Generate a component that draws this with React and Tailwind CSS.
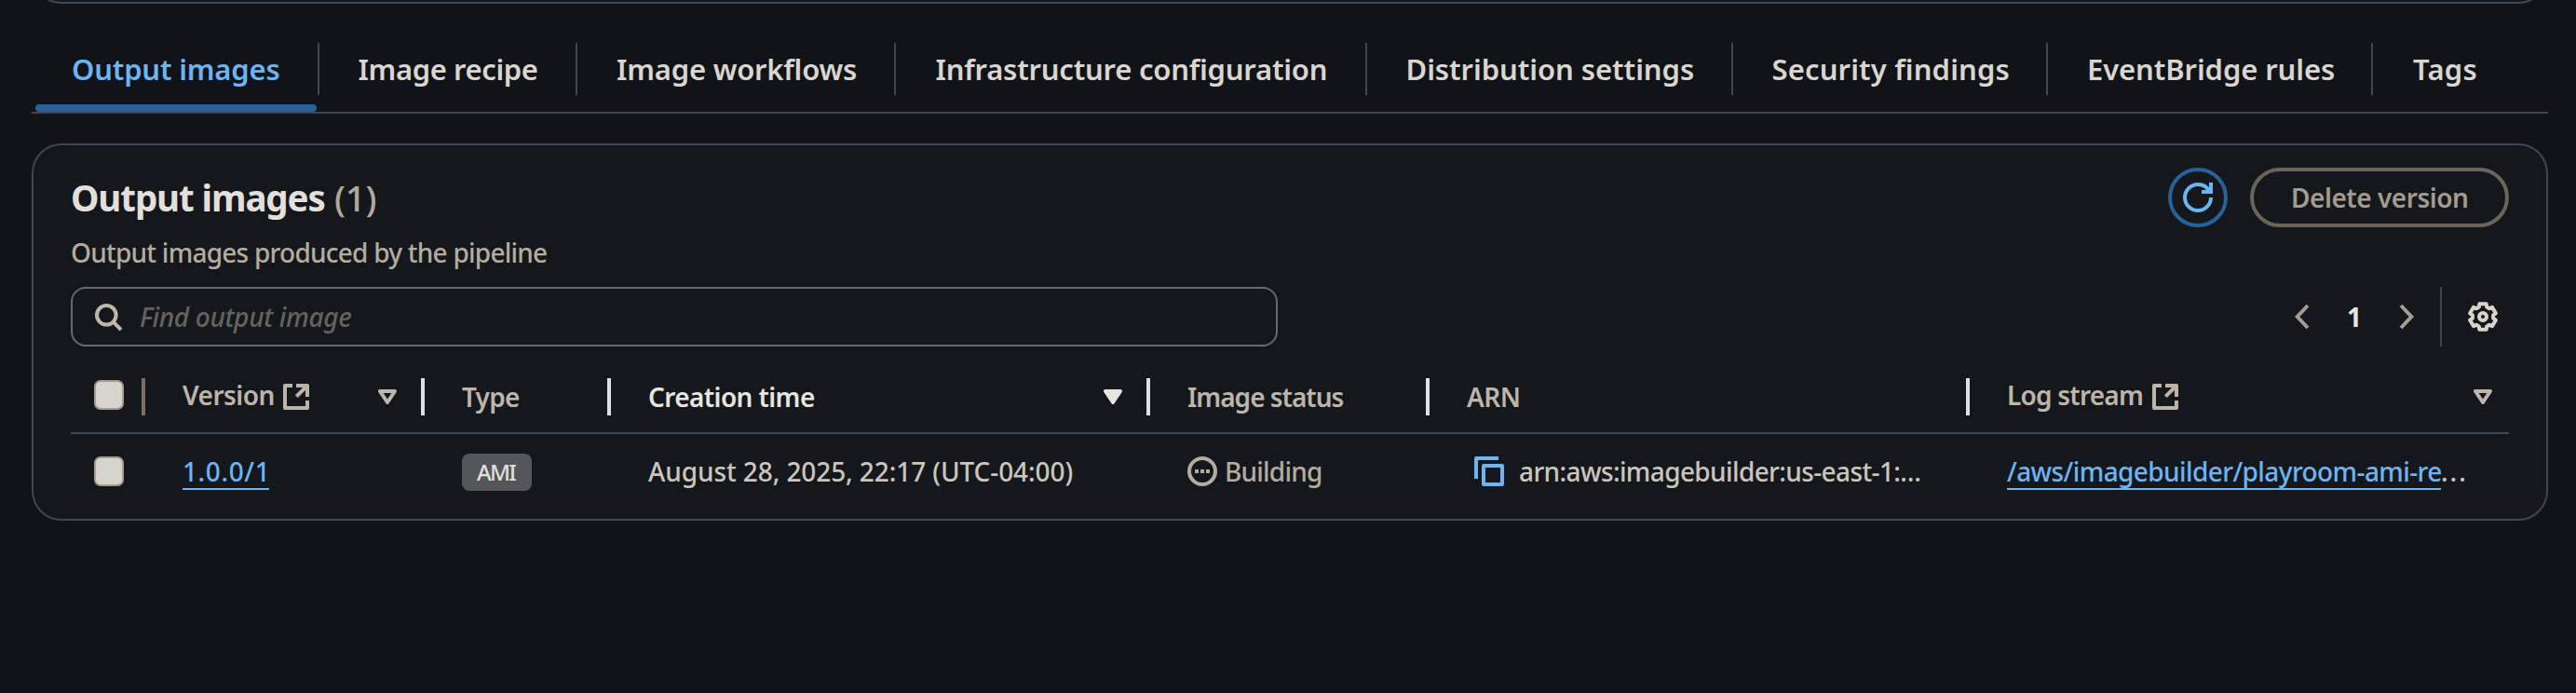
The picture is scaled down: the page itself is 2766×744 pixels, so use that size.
const tabs = [
  { label: 'Output images', size: 'w-[309px] pl-[43px] tracking-[-0.2px]', active: true },
  { label: 'Image recipe', size: 'w-[277px] pl-[41.5px] tracking-[-0.4px]' },
  { label: 'Image workflows', size: 'w-[342px] pl-[42px] tracking-[-0.22px]' },
  { label: 'Infrastructure configuration', size: 'w-[506px] pl-[42.5px] tracking-[-0.22px]' },
  { label: 'Distribution settings', size: 'w-[393px] pl-[41.5px] tracking-[-0.06px]' },
  { label: 'Security findings', size: 'w-[338px] pl-[41.5px] tracking-[0.14px]' },
  { label: 'EventBridge rules', size: 'w-[349px] pl-[42px] tracking-[-0.1px]' },
  { label: 'Tags', size: 'w-[188px] pl-[43px] tracking-[0.23px]', last: true },
];

function Tab({ label, size, active, last }) {
  return (
    <div className={`relative flex h-[118px] items-start pt-[42px] ${size}`}>
      <span
        className={`flex h-14 items-center whitespace-nowrap text-[31px] font-semibold ${
          active ? 'text-[#6cb4f2]' : 'text-[#dad6cf]'
        }`}
      >
        {label}
      </span>
      {!last && <span className="absolute right-0 top-[42px] h-14 w-[2px] bg-[#424650]" />}
      {active && <span className="absolute bottom-[2px] left-1 h-2 w-[302px] rounded-[4px] bg-[#286299]" />}
    </div>
  );
}

function SearchIcon() {
  return (
    <svg className="size-8" viewBox="0 0 32 32" fill="none" stroke="#bfb7ab" strokeWidth="4">
      <circle cx="14.3" cy="14.3" r="10.3" />
      <path d="M21.6 21.6 30 30" />
    </svg>
  );
}

function RefreshIcon() {
  return (
    <svg className="size-8" viewBox="0 0 16 16" fill="none" stroke="#6cb4f2" strokeWidth="2">
      <path d="M15 8a7 7 0 1 1-7-7c2.8 0 5.2 1.6 6.3 4" />
      <path d="M10 5h5V0" />
    </svg>
  );
}

function Chevron({ right }) {
  return (
    <svg
      className={`h-7 w-4 ${right ? 'rotate-180' : ''}`}
      viewBox="0 0 16 28"
      fill="none"
      stroke="#a69e91"
      strokeWidth="4"
    >
      <path d="M14 2 2.7 14 14 26" />
    </svg>
  );
}

function GearIcon() {
  return (
    <svg
      className="size-8"
      viewBox="0 0 32 32"
      fill="none"
      stroke="#d8d4cc"
      strokeWidth="4"
      strokeLinejoin="round"
    >
      <path d="M12.3 2.2h7.4l.5 3.4 2.7 1.6 3.2-1.3 3.7 6.4-2.7 2.1v3.2l2.7 2.1-3.7 6.4-3.2-1.3-2.7 1.6-.5 3.4h-7.4l-.5-3.4-2.7-1.6-3.2 1.3-3.7-6.4 2.7-2.1v-3.2l-2.7-2.1 3.7-6.4 3.2 1.3 2.7-1.6z" />
      <circle cx="16" cy="16" r="4" />
    </svg>
  );
}

function ExternalIcon() {
  return (
    <svg
      className="size-7"
      viewBox="0 0 28 28"
      fill="none"
      stroke="#bdb5aa"
      strokeWidth="4"
      strokeLinejoin="round"
    >
      <path d="M10 2H2v24h24v-8" />
      <path d="M14 2h12v12" />
      <path d="M25 3 14.3 13.7" />
    </svg>
  );
}

function SortIcon({ filled }) {
  return (
    <svg
      className="h-4 w-5"
      viewBox="0 0 20 16"
      fill={filled ? '#e8e4df' : 'none'}
      stroke={filled ? '#e8e4df' : '#bdb5aa'}
      strokeWidth="4"
      strokeLinejoin="round"
    >
      <path d="M2 2h16l-8 12z" />
    </svg>
  );
}

function PendingIcon() {
  return (
    <svg className="size-8" viewBox="0 0 32 32" fill="none">
      <circle cx="16" cy="16" r="14" stroke="#b3ac9f" strokeWidth="4" />
      <path d="M8 14h4v4H8zM14 14h4v4h-4zM20 14h4v4h-4z" fill="#b3ac9f" />
    </svg>
  );
}

function CopyIcon() {
  return (
    <svg
      className="size-8"
      viewBox="0 0 32 32"
      fill="none"
      stroke="#6cb4f2"
      strokeWidth="4"
      strokeLinejoin="round"
    >
      <path d="M26 2H2v22" />
      <path d="M10 10h20v20H10z" />
    </svg>
  );
}

function Checkbox() {
  return <span className="block size-8 rounded-[7px] border-2 border-[#a59c8e] bg-[#d7d4cd]" />;
}

function HeaderCell({ children, sort, sortAt = 'right-[30px]', divider = 'bg-[#e0e0e4]', className = '' }) {
  return (
    <div className={`relative flex h-10 items-center pl-10 font-semibold text-[#bdb5aa] ${className}`}>
      {children}
      {sort && (
        <span className={`absolute top-[12px] h-4 ${sortAt}`}>
          <SortIcon filled={sort === 'filled'} />
        </span>
      )}
      {divider && <span className={`absolute right-0 top-0 h-10 w-1 ${divider}`} />}
    </div>
  );
}

const columns = 'grid grid-cols-[80px_300px_200px_579px_300px_580px_579px]';

export default function App() {
  return (
    <div className="flex h-[744px] w-[2766px] flex-col overflow-hidden bg-[#101318] pl-[34px] font-['Noto_Sans',sans-serif] text-[28px] font-medium leading-10">
      <div className="flex h-1 w-[2702px] items-end overflow-hidden">
        <div className="h-20 w-full shrink-0 rounded-[32px] border-2 border-[#424650] bg-[#14181d]" />
      </div>

      <nav className="flex h-[118px] w-[2702px] border-b-2 border-[#424650]">
        {tabs.map((tab) => (
          <Tab key={tab.label} {...tab} />
        ))}
      </nav>

      <section className="mt-8 flex h-[405px] w-[2702px] flex-col rounded-[32px] border-2 border-[#424650] bg-[#14181d] px-10 pt-6">
        <header className="flex h-16 items-center justify-between">
          <h2 className="flex items-center whitespace-nowrap text-[38.5px]">
            <span className="w-[283px] font-bold tracking-[-1.1px] text-[#e3dfda]">Output images</span>
            <span className="font-medium tracking-[-0.3px] text-[#b0a99c]">(1)</span>
          </h2>
          <div className="flex gap-6">
            <button className="flex size-16 items-center justify-center rounded-full border-4 border-[#286299]">
              <RefreshIcon />
            </button>
            <button className="flex h-16 w-[278px] items-center rounded-full border-4 border-[#6b6459] pl-[40px] font-semibold tracking-[-0.46px] text-[#a39b8e]">
              Delete version
            </button>
          </div>
        </header>

        <p className="mt-[7px] h-10 tracking-[-0.76px] text-[#b3ac9f]">
          Output images produced by the pipeline
        </p>

        <div className="mt-[17px] flex h-16 items-center justify-between">
          <div className="flex h-16 w-[1296px] items-center rounded-[16px] border-2 border-[#656871] pl-[22px]">
            <SearchIcon />
            <span className="pl-[18px] italic tracking-[-0.32px] text-[#66635e]">Find output image</span>
          </div>
          <div className="flex h-16 items-center">
            <Chevron />
            <span className="w-[96px] pl-[40px] font-bold text-[#e8e4df]">1</span>
            <Chevron right />
            <span className="ml-[28px] h-16 w-[2px] bg-[#424650]" />
            <span className="ml-7 mr-3">
              <GearIcon />
            </span>
          </div>
        </div>

        <div className={`${columns} h-[94px] border-b-2 border-[#424650] pt-[34px]`}>
          <div className="relative pl-[25px] pt-[2px]">
            <Checkbox />
            <span className="absolute right-0 top-0 h-10 w-1 bg-[#7a6f60]" />
          </div>
          <HeaderCell sort="hollow">
            <span className="-mt-[5px] w-[108px] tracking-[-0.52px]">Version</span>
            <ExternalIcon />
          </HeaderCell>
          <HeaderCell className="tracking-[-0.75px]">Type</HeaderCell>
          <HeaderCell sort="filled">
            <span className="tracking-[-0.6px] text-[#e8e4df]">Creation time</span>
          </HeaderCell>
          <HeaderCell className="tracking-[-1px]">Image status</HeaderCell>
          <HeaderCell className="tracking-[-0.5px]">ARN</HeaderCell>
          <HeaderCell sort="hollow" sortAt="right-[18px]" divider="">
            <span className="-mt-[5px] w-[156px] whitespace-nowrap tracking-[-0.77px]">Log stream</span>
            <ExternalIcon />
          </HeaderCell>
        </div>

        <div className={`${columns} h-20 items-center whitespace-nowrap text-[#cbc5bb]`}>
          <div className="pl-[25px]">
            <Checkbox />
          </div>
          <div className="flex pl-10">
            <a className="h-10 w-[93px] border-b-2 border-[#6cb4f2] tracking-[0.6px] text-[#6cb4f2]">
              1.0.0/1
            </a>
          </div>
          <div className="pl-10">
            <span className="mt-[2px] flex h-10 w-[75px] items-center rounded-[8px] bg-[#545759] pl-4 text-[24px] tracking-[-1.7px] text-[#e3dfda]">
              AMI
            </span>
          </div>
          <div className="pl-10 tracking-[-0.09px]">August 28, 2025, 22:17 (UTC-04:00)</div>
          <div className="flex items-center gap-2 pl-10 tracking-[-0.78px] text-[#b3ac9f]">
            <PendingIcon />
            <span>Building</span>
          </div>
          <div className="flex items-center gap-4 pl-12 tracking-[-0.62px]">
            <CopyIcon />
            <span>arn:aws:imagebuilder:us-east-1:…</span>
          </div>
          <div className="flex pl-10">
            <a className="h-10 w-[466px] border-b-2 border-[#6cb4f2] tracking-[-0.6px] text-[#6cb4f2]">
              /aws/imagebuilder/playroom-ami-re
            </a>
            <span className="tracking-[2px]">...</span>
          </div>
        </div>
      </section>
    </div>
  );
}
